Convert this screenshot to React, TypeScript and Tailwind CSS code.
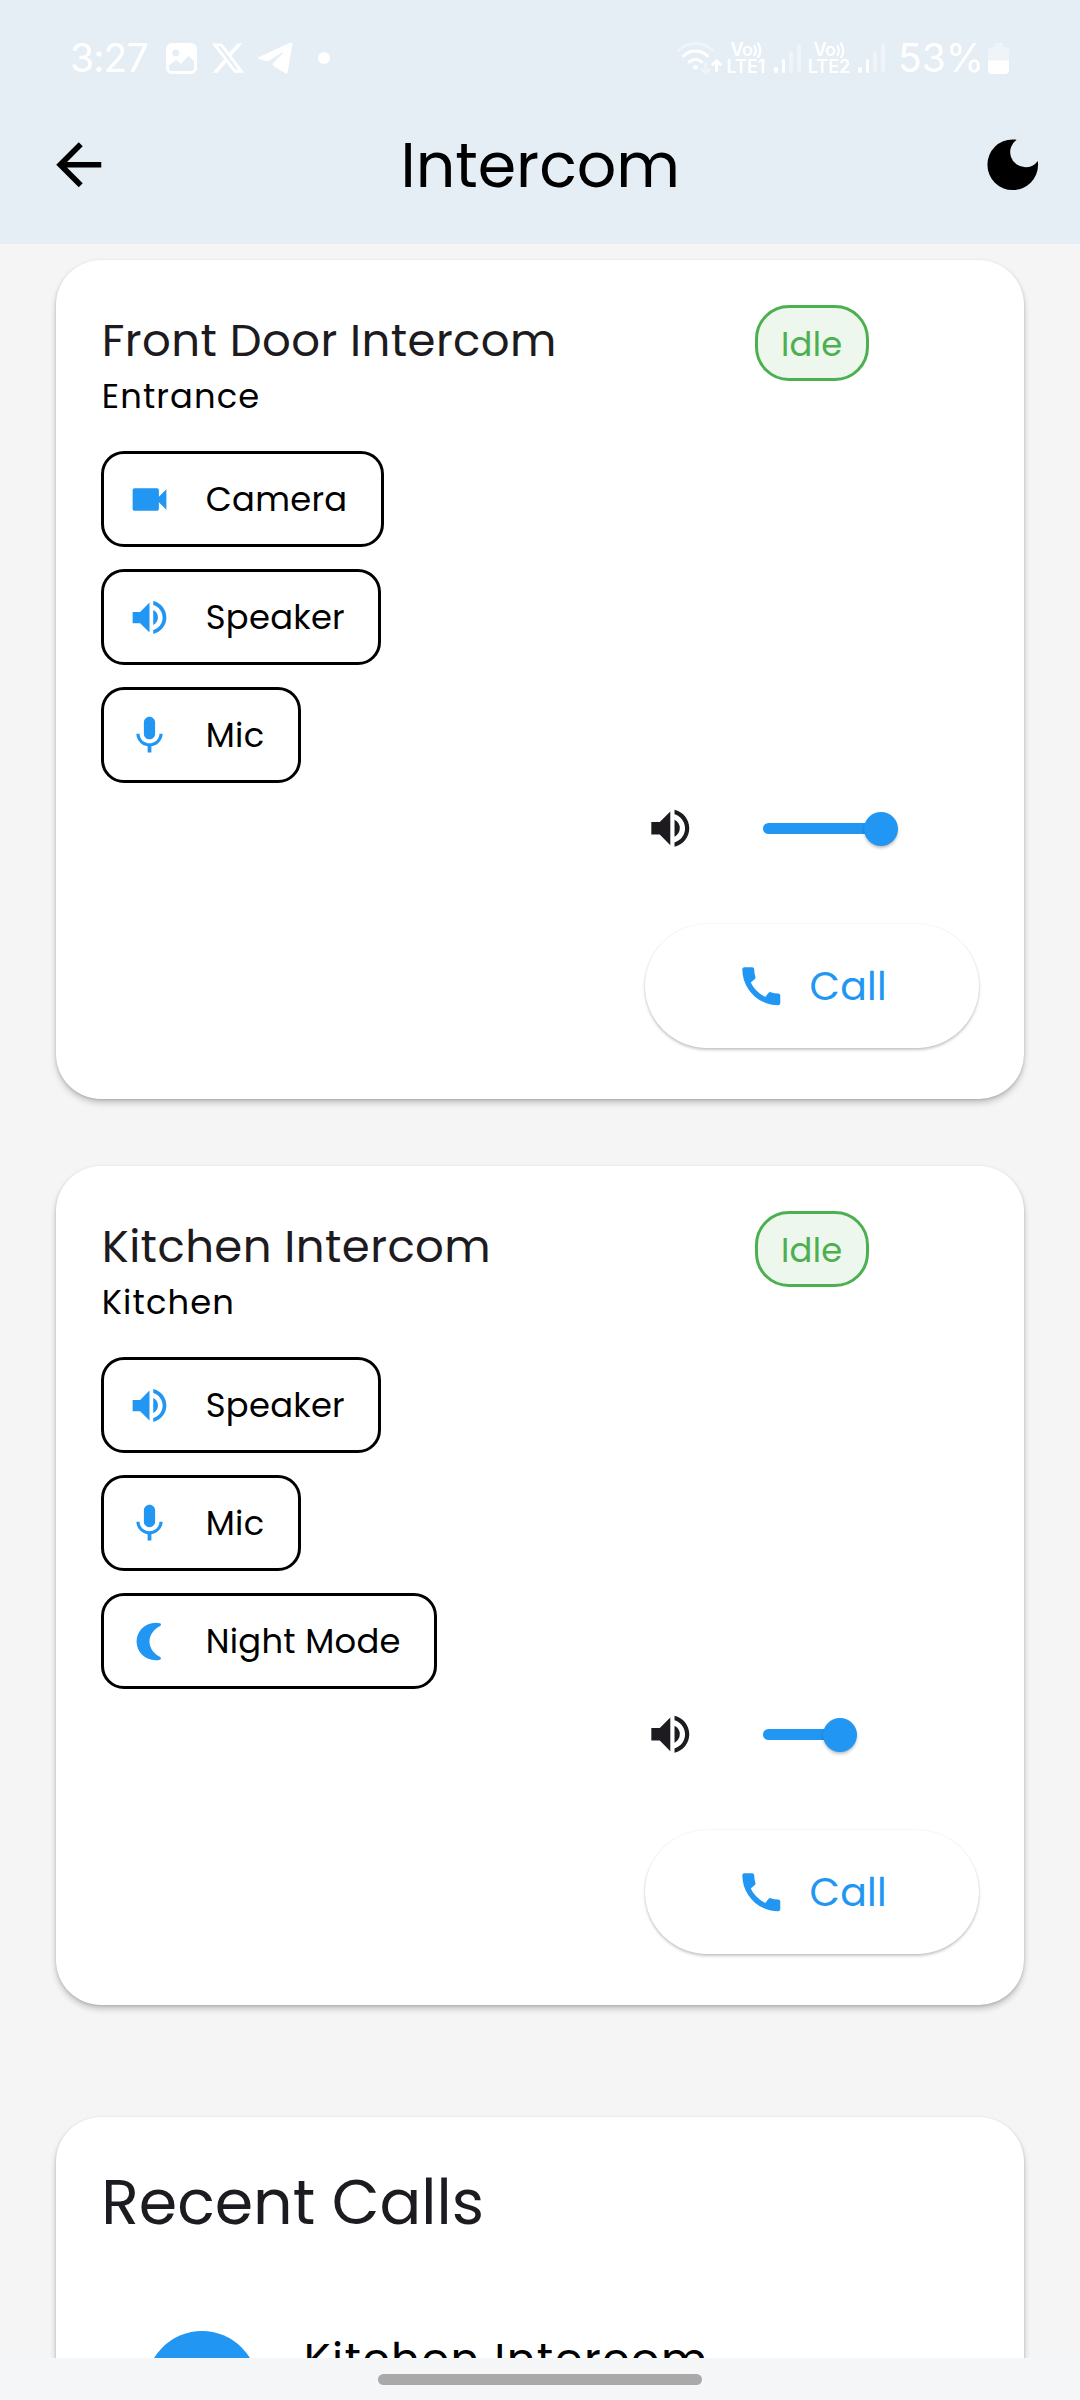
import type { ReactNode } from "react";
import { MdArrowBack, MdCall, MdDarkMode, MdMic, MdVideocam, MdVolumeUp } from "react-icons/md";

function NightIcon({ className }: { className?: string }) {
  return (
    <svg viewBox="0 0 24 24" fill="currentColor" className={className}>
      <path d="M15.3 2c.9 0 1.6.1 2.3.3.7.25.7 1 .1 1.4C14.4 5.3 12 8.4 12 12s2.4 6.7 5.7 8.3c.6.4.6 1.15-.1 1.4-.7.2-1.4.3-2.3.3C9.6 22 5.1 17.5 5.1 12S9.6 2 15.3 2z" />
    </svg>
  );
}

function Bars({ className }: { className?: string }) {
  return (
    <div className={`flex h-[29px] items-end gap-[4px] ${className}`}>
      <span className="h-[6px] w-[4px] rounded-full bg-white" />
      <span className="h-[14px] w-[3px] rounded-full bg-white" />
      <span className="h-[22px] w-[4px] rounded-full bg-[#eff4fa]" />
      <span className="h-[29px] w-[4px] rounded-full bg-[#eff4fa]" />
    </div>
  );
}

function Lte({ n, className }: { n: number; className?: string }) {
  return (
    <div className={`flex w-[40px] flex-col items-center font-['Inter'] text-[18px] font-semibold leading-[17px] ${className}`}>
      <div className="flex h-[17px] items-center">
        <span className="tracking-[-0.5px]">Vo</span>
        <svg viewBox="0 0 9 16" className="h-[16px] w-[9px]" fill="none" stroke="white" strokeWidth="2.2" strokeLinecap="round">
          <path d="M1.5 4c1.5 2.5 1.5 6.5 0 9M5 1.500c3 4 3 10 0 14" />
        </svg>
      </div>
      <span>LTE{n}</span>
    </div>
  );
}

function StatusBar() {
  return (
    <div className="flex h-[86px] items-start pt-[38px] text-white">
      <div className="flex h-[40px] w-[540px] items-center pl-[70px]">
        <span className="w-[96px] font-['Inter'] text-[39px] leading-[40px] tracking-[-0.9px]">3:27</span>
        <svg viewBox="0 0 31 31" className="size-[31px]">
          <path
            fillRule="evenodd"
            fill="white"
            d="M6 0h19a6 6 0 0 1 6 6v19a6 6 0 0 1-6 6H6a6 6 0 0 1-6-6V6a6 6 0 0 1 6-6zM9.800 6.500a3.400 3.400 0 1 0 0 6.800 3.400 3.400 0 0 0 0-6.800zM3 22.500V25a3 3 0 0 0 3 3h19a3 3 0 0 0 3-3v-6.500l-4.500-5q-.8-.7-1.600 0L15 21l-4-3.500q-.9-.6-1.700 0z"
          />
        </svg>
        <svg viewBox="0 0 24 24" className="ml-[13px] size-[36px]" fill="white">
          <path d="M18.244 2.250h3.308l-7.227 8.260 8.502 11.240H16.170l-5.214-6.817L4.990 21.750H1.680l7.730-8.835L1.254 2.250H8.080l4.713 6.231zm-1.161 17.520h1.833L7.084 4.126H5.117z" />
        </svg>
        <svg viewBox="0 0 36 32" className="ml-[11px] h-[32px] w-[36px]" fill="white">
          <path d="M1.500 15.200 33 .8c1.500-.6 2.600.2 2.300 1.900l-4.600 27c-.3 1.700-1.500 2.300-3 1.400L16.500 24c-1.200-.8-1.200-1.900-.2-2.900l9.200-9.700c.7-.9 0-1.500-.9-.9L12.500 18.400c-1 .7-2.200.9-3.400.5l-7.500-2.100c-1.300-.4-1.300-1.100-.1-1.600z" />
        </svg>
        <span className="ml-[25px] size-[12px] rounded-full bg-white" />
      </div>
      <div className="flex h-[40px] w-[540px] items-center pl-[136px]">
        <svg viewBox="0 0 46 36" className="h-[36px] w-[46px] shrink-0" fill="none" strokeLinecap="round" strokeWidth="3">
          <path d="M2.500 10.500c9.500-9.300 24.500-9.300 34 0" stroke="#eff4fa" />
          <path d="M7.500 16c7-6.700 17-6.700 24 0M13.200 22c3.700-3.300 8.900-3.300 12.600 0" stroke="white" />
          <circle cx="19.500" cy="27.300" r="2.300" fill="white" />
          <path d="M29.800 23.500v9M26 29.500l3.800 3.500 3.800-3.500" stroke="#eff4fa" />
          <path d="M40.500 31v-9M36.700 24.500l3.800-3.700 3.800 3.700" stroke="white" strokeWidth="2.800" />
        </svg>
        <Lte n={1} className="ml-[4px]" />
        <Bars className="ml-[8px]" />
        <Lte n={2} className="ml-[8px]" />
        <Bars className="ml-[9px]" />
        <span className="ml-[13px] w-[90px] font-['Inter'] text-[39px] leading-[40px]">53%</span>
        <svg viewBox="0 0 21 31" className="h-[31px] w-[21px]">
          <path d="M6 1.500Q6 0 7.500 0h6Q15 0 15 1.500V4h2a4 4 0 0 1 4 4v10H0V8a4 4 0 0 1 4-4h2z" fill="#eef4f7" />
          <path d="M0 17.500h21V27a4 4 0 0 1-4 4H4a4 4 0 0 1-4-4z" fill="white" />
        </svg>
      </div>
    </div>
  );
}

const FEATURES: Record<string, ReactNode> = {
  Camera: <MdVideocam className="size-[45px]" />,
  Speaker: <MdVolumeUp className="size-[45px]" />,
  Mic: <MdMic className="size-[45px]" />,
  "Night Mode": <NightIcon className="size-[45px]" />,
};

function FeatureButton({ label }: { label: string }) {
  return (
    <button className="flex h-[96px] items-center gap-[34px] rounded-[23px] border-3 border-black pr-[33.500px] pl-[22.500px] text-[#2196f3]">
      {FEATURES[label]}
      <span className="pt-[2px] text-[33.750px] leading-[50px] tracking-[0.280px] text-black">{label}</span>
    </button>
  );
}

function IntercomCard({ name, place, features, volume }: { name: string; place: string; features: string[]; volume: number }) {
  return (
    <section className="h-[839px] shrink-0 rounded-[45px] bg-white px-[45px] pt-[45px] shadow-[0_4px_6px_rgba(0,0,0,0.2),0_1px_3px_rgba(0,0,0,0.14)]">
      <div className="flex h-[109.500px] items-start justify-between">
        <div className="pl-[0.500px]">
          <h2 className="text-[45px] leading-[71.500px] tracking-[0.420px] text-[#1d1b20]">{name}</h2>
          <p className="text-[33.750px] leading-[39px] tracking-[1.125px] text-black">{place}</p>
        </div>
        <span className="mr-[110px] flex h-[76px] w-[114px] items-center justify-center rounded-[34px] border-3 border-[#4caf50] bg-[#edf7ed] pt-[4px] text-[33.750px] tracking-[0.280px] text-[#4caf50]">
          Idle
        </span>
      </div>
      <div className="mt-[36.500px] flex flex-col items-start gap-[22px]">
        {features.map((f) => (
          <FeatureButton key={f} label={f} />
        ))}
      </div>
      <div className="ml-auto flex h-[91px] w-[334px] items-center">
        <MdVolumeUp className="ml-[0.500px] size-[50.600px] text-[#1d1b20]" />
        <div className="ml-[67.500px] h-[11px] rounded-full bg-[#2196f3]" style={{ width: volume }} />
        <div className="-ml-[17px] size-[34px] rounded-full bg-[#2196f3] shadow-[0_2px_3px_rgba(0,0,0,0.25)]" />
      </div>
      <button className="mt-[50px] ml-auto flex h-[124px] w-[334px] items-center justify-center gap-[22.500px] rounded-full bg-white text-[#2196f3] shadow-[0_2px_3px_rgba(0,0,0,0.22),0_0_2px_rgba(0,0,0,0.08)]">
        <MdCall className="size-[50.600px]" />
        <span className="pt-[1px] text-[39.400px] tracking-[0.280px]">Call</span>
      </button>
    </section>
  );
}

export default function App() {
  return (
    <div className="flex h-[2400px] w-[1080px] flex-col overflow-hidden bg-[#f5f5f5] font-['Poppins',sans-serif]">
      <header className="h-[243.500px] shrink-0 bg-[#e5edf5]">
        <StatusBar />
        <div className="flex h-[157px] items-center justify-between pr-[33px] pl-[44.500px]">
          <MdArrowBack className="size-[67.500px]" />
          <h1 className="pt-[2px] pr-[11px] text-[61.875px] leading-[80px] text-black">Intercom</h1>
          <MdDarkMode className="size-[67.500px]" />
        </div>
      </header>
      <main className="flex h-[2114.500px] shrink-0 flex-col overflow-hidden px-[56.250px] pt-[16.500px]">
        <IntercomCard name="Front Door Intercom" place="Entrance" features={["Camera", "Speaker", "Mic"]} volume={118} />
        <div className="h-[67px] shrink-0" />
        <IntercomCard name="Kitchen Intercom" place="Kitchen" features={["Speaker", "Mic", "Night Mode"]} volume={76.5} />
        <section className="mt-[111.500px] h-[600px] shrink-0 rounded-[45px] bg-white px-[45px] pt-[45px] shadow-[0_4px_6px_rgba(0,0,0,0.2),0_1px_3px_rgba(0,0,0,0.14)]">
          <h2 className="text-[61.875px] leading-[81px] text-[#1d1b20]">Recent Calls</h2>
          <div className="mt-[88px] flex items-start gap-[45.500px] pl-[45px]">
            <span className="size-[112px] rounded-full bg-[#2196f3]" />
            <span className="text-[45px] leading-[57px] tracking-[1.400px] text-black">Kitchen Intercom</span>
          </div>
        </section>
      </main>
      <footer className="flex h-[42px] justify-center bg-[#f5f6f8] pt-[16px]">
        <div className="h-[11px] w-[324px] rounded-full bg-[#a9a9a9]" />
      </footer>
    </div>
  );
}
